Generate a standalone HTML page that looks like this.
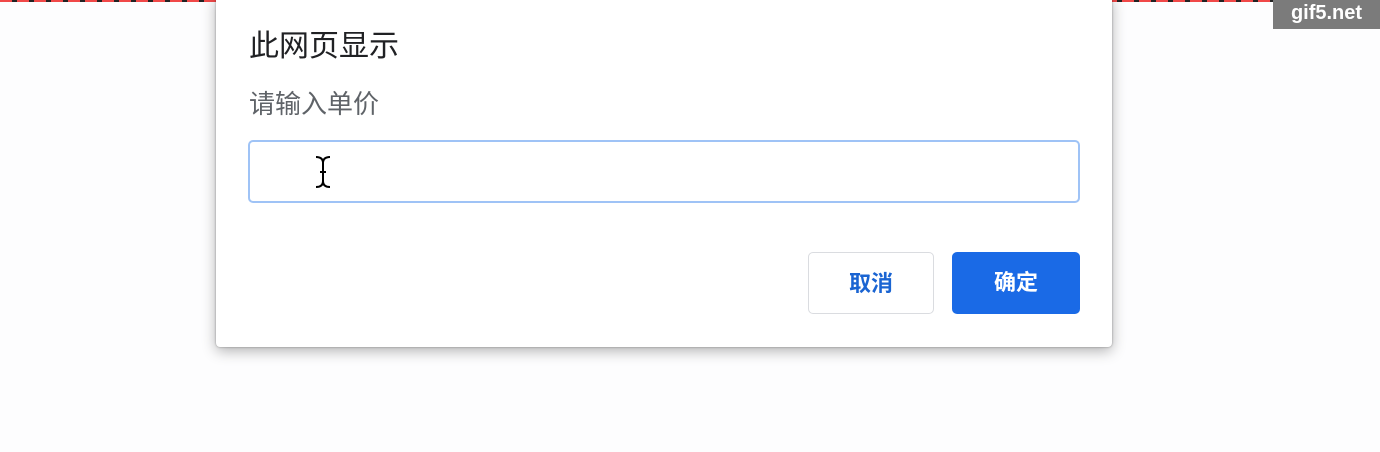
<!DOCTYPE html>
<html><head><meta charset="utf-8"><style>
html,body{margin:0;padding:0;width:1380px;height:452px;overflow:hidden;background:#fdfdfe;font-family:"Liberation Sans","Noto Sans CJK SC",sans-serif;}
.topline{position:absolute;left:0;top:0;width:1380px;height:2px;background:repeating-linear-gradient(90deg,#f04848 0 12px,#222 12px 17px);}
.wm{position:absolute;left:1273px;top:0;width:107px;height:29px;background:#7b7b7b;color:#fff;font-weight:bold;font-size:20px;line-height:27px;text-align:center;}
.dlg{position:absolute;left:216px;top:-4px;width:896px;height:351px;background:#fff;border-radius:0 0 4px 4px;box-shadow:0 4px 14px rgba(0,0,0,.3),0 0 2px rgba(0,0,0,.35);}
.t{position:absolute;left:33px;top:35px;font-size:30px;color:#202124;line-height:32px;}
.s{position:absolute;left:33px;top:93px;font-size:26px;color:#5f6368;line-height:30px;}
.in{position:absolute;left:32px;top:144px;width:828px;height:59px;border:2px solid #9fc3f6;border-radius:5px;}
.b{position:absolute;top:256px;width:126px;height:62px;border-radius:5px;font-size:22px;font-weight:bold;text-align:center;line-height:62px;box-sizing:border-box;}
.c{left:592px;border:1px solid #dadce0;color:#1a64d2;background:#fff;}
.o{left:736px;width:128px;background:#1a6ae6;color:#fff;}
</style></head><body>
<div class="topline"></div>
<div class="dlg">
<div class="t">此网页显示</div>
<div class="s">请输入单价</div>
<div class="in"><svg style="position:absolute;left:64px;top:13px" width="18" height="34" viewBox="0 0 18 34"><path d="M2 2 Q9 2 9 8 Q9 2 16 2 M9 8 V26 M2 32 Q9 32 9 26 Q9 32 16 32 M6 17 H12" stroke="#000" stroke-width="2" fill="none"/></svg></div>
<div class="b c">取消</div>
<div class="b o">确定</div>
</div>
<div class="wm">gif5.net</div>
</body></html>
